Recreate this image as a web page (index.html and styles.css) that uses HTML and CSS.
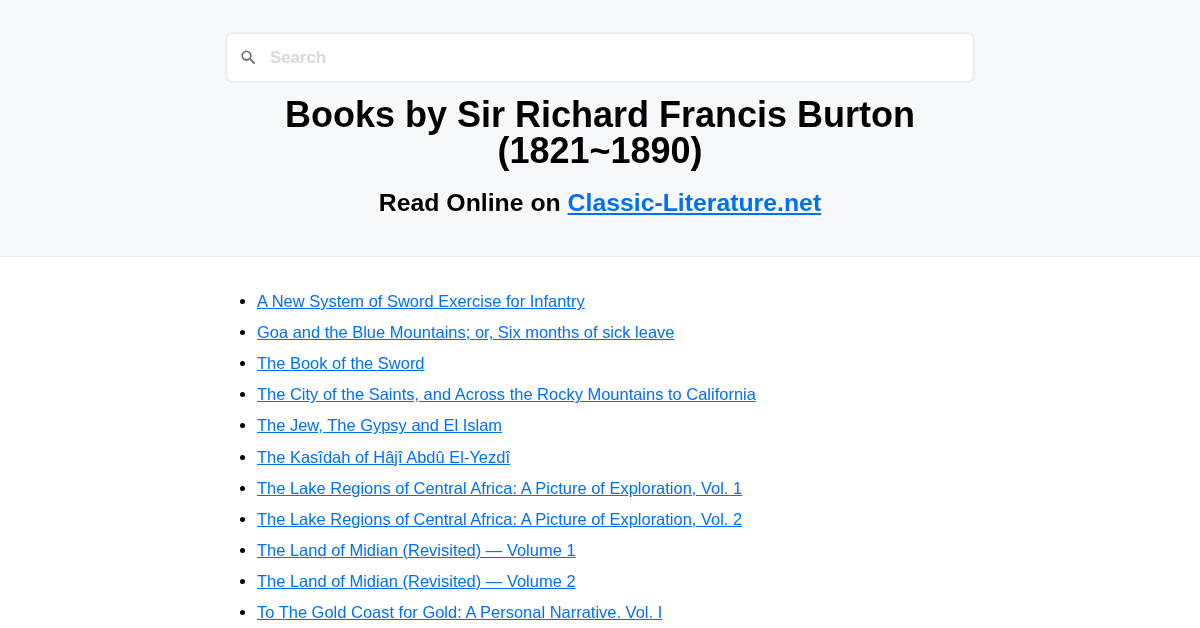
FILE: index.html
```html
<!DOCTYPE html>
<html lang="en">
<head>
    <meta charset="UTF-8">
    <title>Books by Sir Richard Francis Burton</title>
    <link rel="stylesheet" href="styles.css">
</head>
<body>
    <!-- Header -->
    <header class="hero">
        <div class="container">
            <div class="search">
                <svg class="search-icon" width="24" height="24" viewBox="0 0 24 24"><path d="M15.5 14h-.79l-.28-.27A6.47 6.47 0 0 0 16 9.5 6.5 6.5 0 1 0 9.5 16c1.61 0 3.09-.59 4.23-1.57l.27.28v.79l5 4.99L20.49 19l-4.99-5zm-6 0C7.01 14 5 11.99 5 9.5S7.01 5 9.5 5 14 7.01 14 9.5 11.99 14 9.5 14z"/></svg>
                <input class="search-input" type="text" placeholder="Search">
            </div>
            <h1>Books by Sir Richard Francis Burton (1821~1890)</h1>
            <h2>Read Online on <a href="#">Classic-Literature.net</a></h2>
        </div>
    </header>

    <!-- Book list -->
    <main class="container">
        <ul class="books">
            <li><a href="#">A New System of Sword Exercise for Infantry</a></li>
            <li><a href="#">Goa and the Blue Mountains; or, Six months of sick leave</a></li>
            <li><a href="#">The Book of the Sword</a></li>
            <li><a href="#">The City of the Saints, and Across the Rocky Mountains to California</a></li>
            <li><a href="#">The Jew, The Gypsy and El Islam</a></li>
            <li><a href="#">The Kasîdah of Hâjî Abdû El-Yezdî</a></li>
            <li><a href="#">The Lake Regions of Central Africa: A Picture of Exploration, Vol. 1</a></li>
            <li><a href="#">The Lake Regions of Central Africa: A Picture of Exploration, Vol. 2</a></li>
            <li><a href="#">The Land of Midian (Revisited) — Volume 1</a></li>
            <li><a href="#">The Land of Midian (Revisited) — Volume 2</a></li>
            <li><a href="#">To The Gold Coast for Gold: A Personal Narrative. Vol. I</a></li>
        </ul>
    </main>
</body>
</html>
```
FILE: styles.css
```css
* {
    box-sizing: border-box;
}

body {
    margin: 0;
    font-family: "Liberation Sans", Arial, sans-serif;
    color: #000;
    background-color: #fff;
}

a {
    color: #0070f3;
}

.container {
    width: 750px;
    margin: 0 auto;
}

/* Header */
.hero {
    background-color: #f7f8fa;
    border-bottom: 1px solid #e6e8eb;
    padding: 32px 0 0;
    height: 257px;
}

.search {
    display: flex;
    align-items: center;
    height: 51px;
    background-color: #fff;
    border: 2px solid #eceef1;
    border-radius: 8px;
}

.search-icon {
    width: 19px;
    height: 19px;
    margin-left: 12px;
    fill: #6b6b6b;
}

.search-input {
    flex: 1;
    border: none;
    outline: none;
    background: none;
    margin-left: 12px;
    padding: 0;
    font-family: "Liberation Sans", Arial, sans-serif;
    font-size: 16.8px;
    font-weight: bold;
}

.search-input::placeholder {
    color: #d9d9d9;
}

h1 {
    margin: 14px 0 0;
    font-size: 36px;
    line-height: 36px;
    text-align: center;
    will-change: transform;
}

h2 {
    margin: 19px 0 0;
    font-size: 24.8px;
    line-height: 30px;
    text-align: center;
    will-change: transform;
}

/* Book list */
.books {
    margin: 29px 0 0;
    padding: 0.09px 0 0 32px;
    font-size: 16.48px;
    line-height: 31.1px;
    will-change: transform;
}
```
